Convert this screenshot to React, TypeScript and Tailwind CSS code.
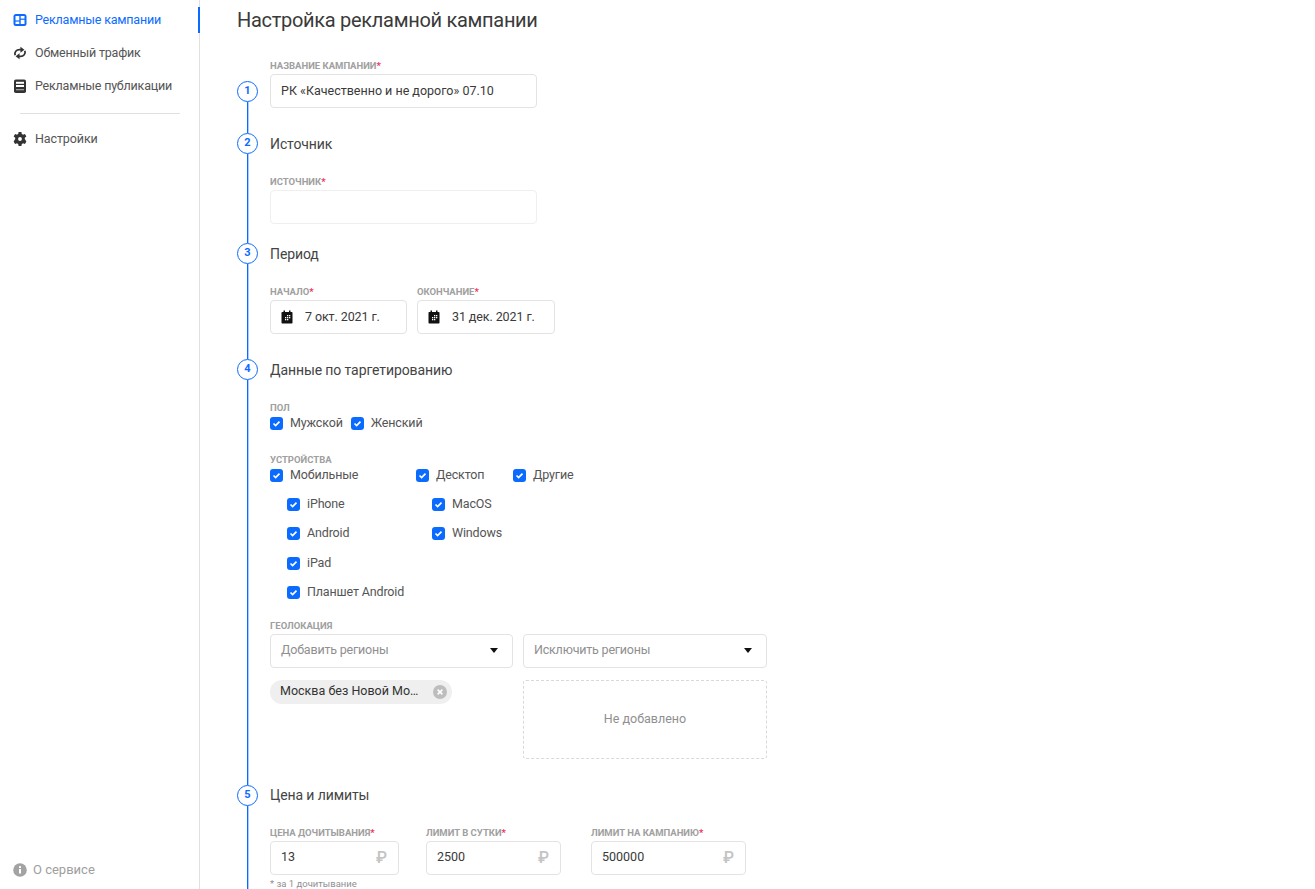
import React from 'react';

const BLUE = '#0b6bff';

const DashIcon = () => (
  <svg width="14" height="14" viewBox="0 0 14 14" className="shrink-0">
    <rect x="0.5" y="1" width="13" height="12" rx="2.5" fill={BLUE} />
    <rect x="2.5" y="3" width="3.8" height="4.4" fill="#fff" />
    <rect x="7.7" y="3" width="3.8" height="2.6" fill="#fff" />
    <rect x="2.5" y="8.6" width="3.8" height="2.4" fill="#fff" />
    <rect x="7.7" y="6.8" width="3.8" height="4.2" fill="#fff" />
  </svg>
);

const SyncIcon = () => (
  <svg width="14" height="14" viewBox="0 0 15 15" fill="none" className="shrink-0">
    <path d="M2.3 9.9C1.2 6.5 3.6 4 7 4H8.5" stroke="#333" strokeWidth="1.9" />
    <path d="M8 0.9V7.1L12.2 4Z" fill="#333" />
    <path d="M12.7 5.1C13.8 8.5 11.4 11 8 11H6.5" stroke="#333" strokeWidth="1.9" />
    <path d="M7 7.9V14.1L2.8 11Z" fill="#333" />
  </svg>
);

const BookIcon = () => (
  <svg width="14" height="14" viewBox="0 0 14 14" className="shrink-0">
    <rect x="1" y="0.5" width="12" height="13.5" rx="1.8" fill="#333" />
    <rect x="3" y="2.8" width="8" height="2" fill="#fff" />
    <rect x="3" y="6" width="8" height="2" fill="#fff" />
    <rect x="3" y="10.4" width="8" height="0.8" fill="#ddd" />
  </svg>
);

const GearIcon = () => (
  <svg width="14" height="14" viewBox="1.5 1 21 22" className="shrink-0">
    <path
      fill="#333"
      fillRule="evenodd"
      d="M14.2 1h-4.4l-.6 3.2c-.7.3-1.3.6-1.9 1.1L4.2 4.2 2 8l2.5 2.1c-.1.6-.1 1.3 0 1.9L2 16l2.2 3.8 3.1-1.1c.6.5 1.2.8 1.9 1.1l.6 3.2h4.4l.6-3.2c.7-.3 1.3-.6 1.9-1.1l3.1 1.1L22 16l-2.5-4c.1-.6.1-1.3 0-1.9L22 8l-2.2-3.8-3.1 1.1c-.6-.5-1.2-.8-1.9-1.1L14.2 1zM12 9a3 3 0 1 1 0 6 3 3 0 0 1 0-6z"
    />
  </svg>
);

const InfoIcon = () => (
  <svg width="14" height="14" viewBox="0 0 14 14" className="shrink-0">
    <circle cx="7" cy="7" r="6.8" fill="#a3a3a3" />
    <rect x="6" y="6" width="2" height="4.5" fill="#fff" />
    <rect x="6" y="3.2" width="2" height="1.8" fill="#fff" />
  </svg>
);

const CalendarIcon = () => (
  <svg width="12" height="14" viewBox="0 0 12 14" className="shrink-0">
    <rect x="0.5" y="2" width="11" height="11.5" rx="0.8" fill="#111" />
    <rect x="2.5" y="0.5" width="1.5" height="3" fill="#111" />
    <rect x="8" y="0.5" width="1.5" height="3" fill="#111" />
    {[[6, 5], [8, 5], [4, 7], [6, 7], [8, 7], [4, 9], [6, 9]].map(([x, y]) => (
      <rect key={`${x}-${y}`} x={x} y={y} width="1.3" height="1.3" fill="#fff" />
    ))}
  </svg>
);

const Label = ({ text, required }: { text: string; required?: boolean }) => (
  <div className="h-[12px] text-[9.5px] leading-[12px] font-bold uppercase text-[#a0a0a0] whitespace-nowrap">
    {text}
    {required && <span className="text-[#f0325a]">*</span>}
  </div>
);

const Box = ({
  children,
  className,
  muted,
}: {
  children?: React.ReactNode;
  className: string;
  muted?: boolean;
}) => (
  <div
    className={`h-[34px] flex items-center rounded-[4px] border border-[#e3e3e3] bg-white text-[12.5px] ${
      muted ? 'text-[#8f8f8f]' : 'text-[#3a3a3a]'
    } ${className}`}
  >
    {children}
  </div>
);

const Check = ({ label }: { label: string }) => (
  <div className="h-[18px] flex items-center gap-[7px] text-[12.5px] tracking-[-0.15px] text-[#555] whitespace-nowrap">
    <span className="w-[13px] h-[13px] shrink-0 rounded-[3px] bg-[#0b6bff] flex items-center justify-center">
      <svg width="9" height="9" viewBox="0 0 9 9" fill="none">
        <path d="M1.5 4.5L3.6 6.5L7.5 2.6" stroke="#fff" strokeWidth="1.7" />
      </svg>
    </span>
    {label}
  </div>
);

const Step = ({
  n,
  offset,
  last,
  children,
}: {
  n: number;
  offset?: boolean;
  last?: boolean;
  children: React.ReactNode;
}) => (
  <div className="flex items-stretch">
    <div className="w-[21px] shrink-0 flex flex-col items-center">
      {offset && <div className="h-[22px] shrink-0" />}
      <div className="w-[21px] h-[21px] shrink-0 rounded-full border border-[#0b6bff] bg-white flex items-center justify-center text-[11px] font-bold text-[#0b6bff]">
        {n}
      </div>
      <div
        className={`w-[1px] flex-1 bg-[#0b6bff] shadow-[1px_0_0_rgba(11,107,255,0.35)] ${last ? 'min-h-[100px]' : ''}`}
      />
    </div>
    <div className="ml-[12px] flex-1 min-w-0">{children}</div>
  </div>
);

const StepTitle = ({ text, last }: { text: string; last?: boolean }) => (
  <div
    className={`h-[21px] flex items-center text-[14px] tracking-[-0.1px] text-[#444] ${last ? '' : 'pt-[2px]'}`}
  >
    {text}
  </div>
);

const Money = ({ label, value, className }: { label: string; value: string; className: string }) => (
  <div>
    <Label text={label} required />
    <Box className={`mt-[2px] pl-[10px] pr-[11px] justify-between ${className}`}>
      {value}
      <span className="text-[16px] font-medium text-[#c4c4c4]">₽</span>
    </Box>
  </div>
);

const Arrow = () => (
  <svg width="8" height="5" viewBox="0 0 8 5">
    <path d="M0 0H8L4 5Z" fill="#111" />
  </svg>
);

export default function App() {
  const nav = [
    { icon: <DashIcon />, text: 'Рекламные кампании', active: true },
    { icon: <SyncIcon />, text: 'Обменный трафик' },
    { icon: <BookIcon />, text: 'Рекламные публикации' },
  ];

  return (
    <div className="h-screen flex overflow-hidden bg-white font-['Roboto',sans-serif]">
      {/* Sidebar */}
      <aside className="w-[200px] shrink-0 border-r border-[#e0e0e0] flex flex-col relative">
        <div className="absolute right-[-1px] top-[7px] w-[2px] h-[26px] bg-[#0b6bff]" />
        <nav className="pt-[3.5px]">
          {nav.map(item => (
            <div
              key={item.text}
              className={`h-[33px] pl-[13px] flex items-center gap-[8px] text-[12.5px] tracking-[-0.2px] ${
                item.active ? 'text-[#0b6bff]' : 'text-[#555]'
              }`}
            >
              {item.icon}
              {item.text}
            </div>
          ))}
        </nav>
        <div className="ml-[20px] mr-[19px] mt-[10px] border-t border-[#e0e0e0]" />
        <div className="h-[33px] mt-[9px] pl-[13px] flex items-center gap-[8px] text-[12.5px] tracking-[-0.1px] text-[#555]">
          <GearIcon />
          Настройки
        </div>
        <div className="mt-auto mb-[10px] h-[18px] pl-[13px] flex items-center gap-[6px] text-[13px] text-[#9e9e9e]">
          <InfoIcon />О сервисе
        </div>
      </aside>

      {/* Form */}
      <main className="flex-1 min-w-0 pl-[37px]">
        <h1 className="h-[40px] flex items-center text-[20px] tracking-[-0.3px] text-[#3a3a3a] mb-[19px]">
          Настройка рекламной кампании
        </h1>

        <Step n={1} offset>
          <div className="h-[1px]" />
          <Label text="Название кампании" required />
          <Box className="mt-[2px] w-[267px] px-[10px]">РК «Качественно и не дорого» 07.10</Box>
          <div className="h-[25px]" />
        </Step>

        <Step n={2}>
          <StepTitle text="Источник" />
          <div className="h-[22px]" />
          <Label text="Источник" required />
          <Box className="mt-[2px] w-[267px] border-[#efefef]" />
          <div className="h-[19px]" />
        </Step>

        <Step n={3}>
          <StepTitle text="Период" />
          <div className="h-[22px]" />
          <div className="flex gap-[10px]">
            <div>
              <Label text="Начало" required />
              <Box className="mt-[2px] w-[137px] pl-[10px] gap-[12px] tracking-[-0.1px]">
                <CalendarIcon />7 окт. 2021 г.
              </Box>
            </div>
            <div>
              <Label text="Окончание" required />
              <Box className="mt-[2px] w-[138px] pl-[10px] gap-[12px] tracking-[-0.1px]">
                <CalendarIcon />31 дек. 2021 г.
              </Box>
            </div>
          </div>
          <div className="h-[25px]" />
        </Step>

        <Step n={4}>
          <StepTitle text="Данные по таргетированию" />
          <div className="h-[22px]" />
          <Label text="Пол" />
          <div className="flex gap-[8px]">
            <Check label="Мужской" />
            <Check label="Женский" />
          </div>
          <div className="h-[22px]" />
          <Label text="Устройства" />
          <div className="flex">
            <div className="w-[146px] flex flex-col gap-[11.4px]">
              <Check label="Мобильные" />
              <div className="pl-[17px] flex flex-col gap-[11.4px]">
                <Check label="iPhone" />
                <Check label="Android" />
                <Check label="iPad" />
                <Check label="Планшет Android" />
              </div>
            </div>
            <div className="w-[97px] flex flex-col gap-[11.4px]">
              <Check label="Десктоп" />
              <div className="pl-[16px] flex flex-col gap-[11.4px]">
                <Check label="MacOS" />
                <Check label="Windows" />
              </div>
            </div>
            <Check label="Другие" />
          </div>
          <div className="h-[18px]" />
          <Label text="Геолокация" />
          <div className="mt-[2px] w-[497px] grid grid-cols-[243px_244px] gap-x-[10px] gap-y-[12px]">
            <Box muted className="pl-[10px] pr-[14px] justify-between tracking-[-0.2px]">
              Добавить регионы
              <Arrow />
            </Box>
            <Box muted className="pl-[10px] pr-[14px] justify-between tracking-[-0.2px]">
              Исключить регионы
              <Arrow />
            </Box>
            <div>
              <div className="w-[182px] h-[24px] rounded-full bg-[#efefef] pl-[10px] pr-[5px] flex items-center justify-between text-[12.5px] text-[#333]">
                <span className="w-[142px] truncate">Москва без Новой Москвы</span>
                <svg width="14" height="14" viewBox="0 0 14 14">
                  <circle cx="7" cy="7" r="7" fill="#bdbdbd" />
                  <path d="M4.6 4.6L9.4 9.4M9.4 4.6L4.6 9.4" stroke="#fff" strokeWidth="1.5" />
                </svg>
              </div>
            </div>
            <div className="h-[79px] rounded-[3px] border border-dashed border-[#d9d9d9] flex items-center justify-center text-[12.5px] text-[#8f8f8f]">
              Не добавлено
            </div>
          </div>
          <div className="h-[26px]" />
        </Step>

        <Step n={5} last>
          <StepTitle text="Цена и лимиты" last />
          <div className="h-[21px]" />
          <div className="flex">
            <Money label="Цена дочитывания" value="13" className="w-[129px]" />
            <div className="w-[27px]" />
            <Money label="Лимит в сутки" value="2500" className="w-[135px]" />
            <div className="w-[30px]" />
            <Money label="Лимит на кампанию" value="500000" className="w-[155px]" />
          </div>
          <div className="mt-[3px] text-[9.5px] leading-[12px] text-[#8f8f8f]">* за 1 дочитывание</div>
        </Step>
      </main>
    </div>
  );
}
